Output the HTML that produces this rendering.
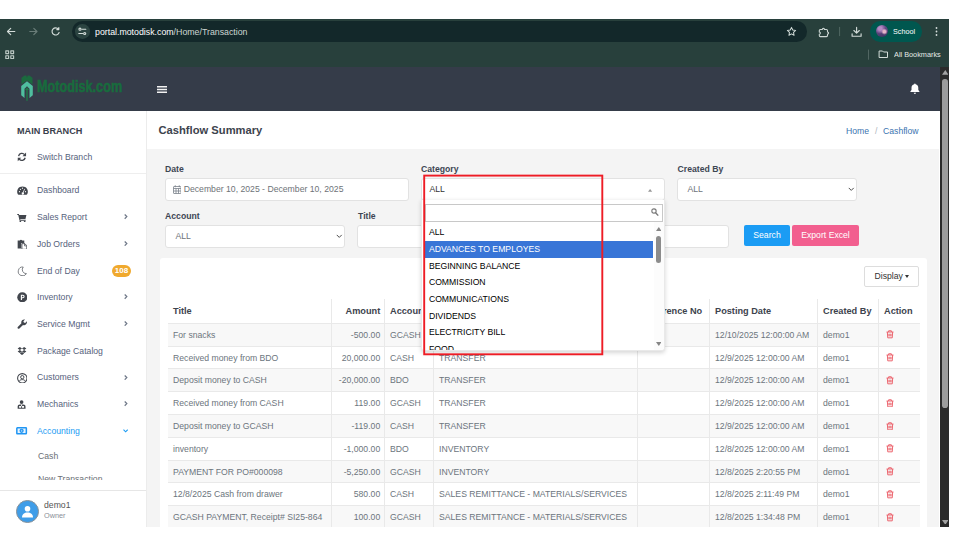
<!DOCTYPE html>
<html><head><meta charset="utf-8">
<style>
*{box-sizing:border-box;margin:0;padding:0}
html,body{width:960px;height:540px;overflow:hidden;background:#fff;font-family:"Liberation Sans",sans-serif;}
.abs{position:absolute}
#win{position:absolute;left:0;top:19px;width:949px;height:508px;overflow:hidden;background:#f4f4f4}
/* browser chrome */
#chrome{position:absolute;left:0;top:0;width:949px;height:48px;background:#28403c}
#omni{position:absolute;left:72px;top:2.200px;width:735px;height:20.600px;border-radius:10.300px;background:#13282a}
#omni .url{position:absolute;left:22.500px;top:5.700px;font-size:9.300px;color:#fff;white-space:nowrap;transform:scaleX(.945);transform-origin:0 0}
#prof{position:absolute;left:870px;top:2.300px;width:52px;height:20.300px;border-radius:10.200px;background:#00574f}
#prof span{position:absolute;left:22.500px;top:6px;font-size:8px;color:#fff;transform:scaleX(.9);transform-origin:0 0}
#bm{position:absolute;left:893.5px;top:30.5px;font-size:8px;color:#e3e8e6;white-space:nowrap;transform:scaleX(.915);transform-origin:0 0}
/* app header */
#hdr{position:absolute;left:0;top:48px;width:940px;height:44px;background:#353c49;z-index:2}
#logo{position:absolute;left:36.600px;top:11.300px;font-size:15.800px;font-weight:bold;color:#186c3d;-webkit-text-stroke:.5px #186c3d;transform:scaleX(.802);transform-origin:0 0;white-space:nowrap}
/* sidebar */
#side{position:absolute;left:0;top:92px;width:147px;height:416px;background:#fff;border-right:1px solid #ececec}
.mi{position:absolute;left:37px;font-size:8.67px;color:#56627c;white-space:nowrap}
.chev{position:absolute;left:123px;width:6px;height:8px}
.ico{position:absolute;left:16px;width:12px;height:12px}
/* scrollbar */
#sb{position:absolute;left:940px;top:48px;width:9px;height:460px;background:#2b2b2b}
#sb .th{position:absolute;left:2.100px;top:11.800px;width:5.500px;height:329.200px;border-radius:2.800px;background:#9c9c9c}
/* main */
#titlebar{position:absolute;left:147px;top:92px;width:793px;height:38px;background:#fff}
#titlebar h1{position:absolute;left:11.5px;top:13px;font-size:11.2px;font-weight:bold;color:#3d434d}
.bc{position:absolute;top:14.500px;font-size:8.67px;color:#3a74b0}
.lbl{position:absolute;font-size:8.67px;font-weight:bold;color:#3d4653}
.inp{position:absolute;height:22.600px;background:#fff;border:1px solid #e2e2e2;border-radius:3px;font-size:8.67px;color:#6e7378;line-height:20.500px;padding-left:9.500px;white-space:nowrap}
#card{position:absolute;left:160px;top:239px;width:767px;height:280px;background:#fff;border-radius:3px}
.btn{position:absolute;top:206.400px;height:21px;font-size:8.67px;color:#fff;text-align:center;line-height:20px;border-radius:2px}
table{position:absolute;left:168px;top:280.400px;width:751.500px;border-collapse:collapse;table-layout:fixed;font-size:8.67px;color:#6c757d}
td,th{height:22.8px;padding:0 5px;border-left:1px solid #e9e9e9;border-top:1px solid #e9e9e9;white-space:nowrap;overflow:hidden;text-align:left}
th{font-size:9.2px;color:#3d434d;border-top:none;height:24px}
td:first-child,th:first-child{border-left:none}
tr.o td{background:#f8f8f8}
td.r,th.r{text-align:right;padding-right:3.800px}
/* dropdown */
#dd{position:absolute;left:421px;top:181.200px;width:243.800px;height:151.200px;background:#fff;border:1px solid #e9e9e9;border-top:none;border-radius:0 0 3.500px 3.500px;box-shadow:0 1.500px 4px rgba(0,0,0,.16);overflow:hidden}
#dd .s{position:absolute;left:3.200px;top:3.600px;width:237.600px;height:18.200px;border:1px solid #c8c8c8;background:#fff}
.op{position:absolute;left:3.200px;width:228.200px;height:16.200px;font-size:8.67px;line-height:16.200px;color:#000;padding-left:3.700px;white-space:nowrap}
.op.h{background:#3875d7;color:#fff;height:16.400px;line-height:16.400px}
#red{position:absolute;left:422px;top:154px;width:184px;height:184px}
</style></head><body>
<div id="win">
 <div id="chrome">
  <svg class="abs" style="left:0;top:0" width="949" height="48" viewBox="0 0 949 48" fill="none" stroke="#d3dcd9" stroke-width="1.150" stroke-linecap="round" stroke-linejoin="round">
   <path d="M14.800 12.500H7.700M10.700 9.300l-3.200 3.200 3.200 3.200"/>
   <path d="M29.800 12.500H36.800M33.800 9.300l3.200 3.200-3.200 3.200" stroke="#6a7d79"/>
   <path d="M58.5 10.2a3.6 3.6 0 1 0 .6 3.3M58.8 8.6v2h-2"/>
   <g stroke-width="1.150" stroke="#bcc8c4"><rect x="5.800" y="31.800" width="2.800" height="2.800"/><rect x="10.800" y="31.800" width="2.800" height="2.800"/><rect x="5.800" y="36.700" width="2.800" height="2.800"/><rect x="10.800" y="36.700" width="2.800" height="2.800"/></g>
   <path d="M820.300 10.500h2a1.100 1.100 0 0 1 2.200 0h2a1 1 0 0 1 1 1v1.400a1.100 1.100 0 0 1 0 2.200v1.500a1 1 0 0 1-1 1h-6.200a1 1 0 0 1-1-1v-1.400a1.100 1.100 0 0 0 0-2.200v-1.500a1 1 0 0 1 1-1z" stroke-width="1.050" stroke="#cdd7d4"/>
   <path d="M839.600 8.300v8.400" stroke="#566b67" stroke-width=".9"/>
   <path d="M856.600 8.400v5.600M853.900 11.500l2.700 2.700 2.700-2.700M852.100 14.800v2.400h9v-2.400" stroke="#d3dcd9"/>
   <path d="M868.500 31v9.300" stroke="#566b67" stroke-width=".9"/>
   <path d="M879.5 32h3l1 1h4v5.500h-8z" stroke-width="1"/>
  </svg>
  <div id="omni">
   <div class="abs" style="left:3px;top:3px;width:14.600px;height:14.600px;border-radius:7.300px;background:#2b4441"></div><svg class="abs" style="left:3px;top:3px" width="14.600" height="14.600" viewBox="0 0 14.600 14.600" fill="none" stroke="#d5dedb" stroke-width="1.100" stroke-linecap="round"><circle cx="5" cy="5.200" r="1.050"/><path d="M7 5.200h3.800M3.800 9.500h3.800"/><circle cx="9.700" cy="9.500" r="1.050"/></svg>
   <div class="url">portal.motodisk.com<span style="color:#cdd6d3">/Home/Transaction</span></div>
   <svg class="abs" style="left:714px;top:4.800px" width="11" height="11" viewBox="0 0 24 24" fill="none" stroke="#cfd9d6" stroke-width="2.200" stroke-linejoin="round"><path d="M12 3l2.700 5.800 6.300.800-4.600 4.400 1.200 6.300L12 17.200 6.400 20.300l1.200-6.300L3 9.600l6.300-.8z"/></svg>
  </div>
  <div id="prof"><div class="abs" style="left:6px;top:4.200px;width:12px;height:12px;border-radius:6px;background:radial-gradient(circle at 70% 55%,#e7b3c9 0 12%,rgba(231,179,201,0) 30%),radial-gradient(circle at 35% 30%,#b58ac4 0 15%,rgba(181,138,196,0) 45%),linear-gradient(160deg,#7a5a9c,#3d3160)"></div><span>School</span></div>
  <svg class="abs" style="left:933.500px;top:8px" width="5" height="9" viewBox="0 0 5 9" fill="#d6dedb"><circle cx="2.500" cy="1" r=".9"/><circle cx="2.500" cy="4.500" r=".9"/><circle cx="2.500" cy="8" r=".9"/></svg>
  <div id="bm">All Bookmarks</div>
 </div>
 <div id="hdr">
  <svg class="abs" style="left:21px;top:8.400px" width="12" height="26" viewBox="0 0 12 26"><path d="M.5 9.500V2.700L3.700.4h1.500l.8 2.200.8-2.200h1.500l3.200 2.300v6.800L6 5.500z" fill="#1b6a3e"/><path d="M6 6.300L.2 11v9.200l3.300 2.800v-9.300L6 11.200l2.500 2.500V23l3.300-2.800V11z" fill="#4fbf9f"/><path d="M6 12.200l-2.100 2.900h1.400v10.700h1.400V15.100h1.400z" fill="#1f7a48"/></svg>
  <div id="logo">Motodisk.com</div>
  <svg class="abs" style="left:157px;top:18.600px" width="10.200" height="7" viewBox="0 0 10.200 7" fill="#f2f2f2"><rect y="0" width="10.200" height="1.500"/><rect y="2.750" width="10.200" height="1.500"/><rect y="5.500" width="10.200" height="1.500"/></svg>
  <svg class="abs" style="left:910.300px;top:15.800px" width="9.800" height="11.600" viewBox="0 0 11 13" fill="#fff"><path d="M5.500 0.500c.5 0 .8.300.8.800 2 .5 3 2 3 4v2.500l1.200 1.500v.7H.5v-.7L1.700 7.800V5.300c0-2 1-3.500 3-4 0-.5.300-.8.800-.8zM4.200 11h2.600a1.300 1.300 0 0 1-2.600 0z"/></svg>
 </div>
 <div id="side">
  <div class="mi" style="top:15.2px;left:17px;font-weight:bold;color:#3a404c;font-size:9.14px">MAIN BRANCH</div>
  <svg class="abs" style="left:17.1px;top:41.1px" width="9.8" height="9.8" viewBox="0 0 16 16"><g fill="none" stroke="#42464d" stroke-width="2.200"><path d="M2.600 6.600A5.600 5.600 0 0 1 12.400 4.300"/><path d="M13.400 9.400A5.600 5.600 0 0 1 3.600 11.700"/></g><path d="M14.800 1v5.800H9z" fill="#42464d"/><path d="M1.200 15V9.200H7z" fill="#42464d"/></svg>
  <svg class="abs" style="left:16.5px;top:73.7px" width="11" height="11" viewBox="0 0 16 16"><path d="M8 2a7.800 7.800 0 0 0-6.800 11.600c.2.400.6.600 1 .6h11.600c.4 0 .8-.2 1-.6A7.800 7.800 0 0 0 8 2z" fill="#42464d"/><g fill="#fff"><circle cx="3.600" cy="9.800" r=".9"/><circle cx="5" cy="6.200" r=".9"/><circle cx="8" cy="4.700" r=".9"/><circle cx="12.400" cy="9.800" r=".9"/><path d="M10.600 5.400l.9.300-1.900 5.200a1.700 1.700 0 1 1-1-.4z"/></g></svg>
  <svg class="abs" style="left:17.2px;top:101.5px" width="9.6" height="9.6" viewBox="0 0 16 16"><path d="M.4 1.800h2.800l.5 1.700h12l-1.600 6.400H5.400l.3 1.300h8.800v1.600H4.300L2.100 3.400H.4z" fill="#42464d"/><circle cx="5.600" cy="14.200" r="1.400" fill="#42464d"/><circle cx="12.800" cy="14.200" r="1.400" fill="#42464d"/></svg>
  <svg class="abs" style="left:16.7px;top:127.5px" width="10.6" height="10.6" viewBox="0 0 16 16"><path d="M1 2.200h3.200a2 2 0 0 1 3.600 0H11V6H6.400v8.400H1z" fill="#42464d"/><path d="M7.400 7h4.400l3 3v5.600H7.400z" fill="#fff" stroke="#42464d" stroke-width="1.300"/><path d="M11.400 7v3.400h3.400" fill="none" stroke="#42464d" stroke-width="1.100"/></svg>
  <svg class="abs" style="left:16.8px;top:154.6px" width="10.4" height="10.4" viewBox="0 0 16 16"><path d="M9.600 1.600A6.800 6.800 0 1 0 14.600 11.800 6.200 6.200 0 0 1 9.600 1.600z" fill="none" stroke="#55595f" stroke-width="1.150" stroke-linejoin="round"/></svg>
  <svg class="abs" style="left:16.7px;top:180.7px" width="10.6" height="10.6" viewBox="0 0 16 16"><circle cx="8" cy="8" r="7.600" fill="#42464d"/><path d="M5.800 12V4.200h3.100a2.600 2.600 0 0 1 0 5.200H7.500V12zM7.500 5.700v2.200h1.300a1.100 1.100 0 0 0 0-2.200z" fill="#fff"/></svg>
  <svg class="abs" style="left:16.8px;top:207.6px" width="10.4" height="10.4" viewBox="0 0 16 16"><path d="M15.200 3.600l-2.600 2.600-2-.8-.8-2 2.600-2.600a4.600 4.600 0 0 0-5.600 5.900L1.200 12.300a1.800 1.800 0 0 0 2.500 2.500l5.600-5.600a4.600 4.600 0 0 0 5.900-5.600z" fill="#42464d"/></svg>
  <svg class="abs" style="left:17px;top:234.5px" width="10" height="10" viewBox="0 0 16 16"><path d="M4.600 1.400L1 3.800l3.600 2.400L8 3.800zM11.400 1.400L8 3.800l3.400 2.400L15 3.800zM1 8.600l3.600 2.400L8 8.600 4.600 6.200zM11.400 6.200L8 8.600l3.400 2.400L15 8.600zM4.600 11.800L8 14.200l3.400-2.400L8 9.600z" fill="#42464d"/></svg>
  <svg class="abs" style="left:16.7px;top:261.5px" width="10.6" height="10.6" viewBox="0 0 16 16"><circle cx="8" cy="8" r="7.100" fill="none" stroke="#42464d" stroke-width="1.600"/><circle cx="8" cy="6.300" r="2.500" fill="none" stroke="#42464d" stroke-width="1.500"/><path d="M3.300 12.600c.9-1.900 2.600-2.600 4.700-2.600s3.800.7 4.700 2.600" fill="none" stroke="#42464d" stroke-width="1.500"/></svg>
  <svg class="abs" style="left:17.4px;top:288.5px" width="9.2" height="9" viewBox="0 0 16 16"><circle cx="8" cy="3.600" r="3.300" fill="#42464d"/><path d="M1 15.600v-3.800c0-2.400 1.700-3.800 3.800-3.800h6.400c2.100 0 3.800 1.400 3.800 3.800v3.800z" fill="#42464d"/><path d="M3.600 10.800h3.600v2.800H3.600zM8.800 10.800h3.600v2.800H8.800z" fill="#fff"/><path d="M7.200 8h1.600v3H7.200z" fill="#fff"/></svg>
  <svg class="abs" style="left:16.4px;top:316.1px" width="11.2" height="7.6" viewBox="0 0 22 15"><rect x="1.600" y="1.600" width="18.800" height="11.800" rx="1" fill="#e9f4fe" stroke="#2196f3" stroke-width="3"/><ellipse cx="11" cy="7.500" rx="4.200" ry="4.200" fill="#2196f3"/><ellipse cx="11" cy="7.500" rx="1.500" ry="2.200" fill="#8fc9fa"/></svg>
  <svg class="abs" style="left:124px;top:103.4px" width="3.600" height="5.200" viewBox="0 0 3.600 5.200" fill="none" stroke="#6f7888" stroke-width="1.250"><path d="M.7.500L2.800 2.600.7 4.700"/></svg>
  <svg class="abs" style="left:124px;top:130.2px" width="3.600" height="5.200" viewBox="0 0 3.600 5.200" fill="none" stroke="#6f7888" stroke-width="1.250"><path d="M.7.500L2.800 2.600.7 4.700"/></svg>
  <svg class="abs" style="left:124px;top:183.4px" width="3.600" height="5.200" viewBox="0 0 3.600 5.200" fill="none" stroke="#6f7888" stroke-width="1.250"><path d="M.7.500L2.800 2.600.7 4.700"/></svg>
  <svg class="abs" style="left:124px;top:210.2px" width="3.600" height="5.200" viewBox="0 0 3.600 5.200" fill="none" stroke="#6f7888" stroke-width="1.250"><path d="M.7.500L2.800 2.600.7 4.700"/></svg>
  <svg class="abs" style="left:124px;top:263.7px" width="3.600" height="5.200" viewBox="0 0 3.600 5.200" fill="none" stroke="#6f7888" stroke-width="1.250"><path d="M.7.500L2.800 2.600.7 4.700"/></svg>
  <svg class="abs" style="left:124px;top:290.4px" width="3.600" height="5.200" viewBox="0 0 3.600 5.200" fill="none" stroke="#6f7888" stroke-width="1.250"><path d="M.7.500L2.800 2.600.7 4.700"/></svg>
  <svg class="abs" style="left:123.300px;top:318px" width="5.200" height="3.600" viewBox="0 0 5.200 3.600" fill="none" stroke="#1d9cf3" stroke-width="1.100"><path d="M.5.700L2.600 2.800 4.700.7"/></svg>
  <div class="mi" style="top:41.2px">Switch Branch</div>
  <div class="abs" style="left:0;top:62px;width:146px;height:1px;background:#eee"></div>
  <div class="mi" style="top:74.2px">Dashboard</div>
  <div class="mi" style="top:101.2px">Sales Report</div>
  <div class="mi" style="top:128.2px">Job Orders</div>
  <div class="mi" style="top:155.2px">End of Day</div>
  <div class="abs" style="left:112px;top:154px;width:19px;height:12px;border-radius:6px;background:#f0a92e;color:#fff;font-size:8px;font-weight:bold;text-align:center;line-height:12px">108</div>
  <div class="mi" style="top:181.2px">Inventory</div>
  <div class="mi" style="top:208.2px">Service Mgmt</div>
  <div class="mi" style="top:235.2px">Package Catalog</div>
  <div class="mi" style="top:261.2px">Customers</div>
  <div class="mi" style="top:288.2px">Mechanics</div>
  <div class="mi" style="top:315.2px;color:#1d9cf3">Accounting</div>
  <div class="abs" style="left:0;top:330px;width:146px;height:39.300px;overflow:hidden">
   <div class="mi" style="top:10.2px;left:38px;color:#6b6f76">Cash</div>
   <div class="mi" style="top:33.2px;left:38px;color:#6b6f76">New Transaction</div>
  </div>
  <div class="abs" style="left:0;top:379px;width:146px;height:38px;background:#fff;border-top:1px solid #e6e6e6">
   <div class="abs" style="left:16px;top:9px;width:23px;height:23px;border-radius:12px;background:#3f9de8;border:1px solid #8a9299"></div>
   <svg class="abs" style="left:21px;top:14px" width="13" height="13" viewBox="0 0 13 13" fill="#fff"><circle cx="6.500" cy="3.800" r="2.800"/><path d="M1 12.500c0-3.500 2.500-5 5.500-5s5.500 1.500 5.500 5z"/></svg>
   <div class="abs" style="left:44px;top:8.500px;font-size:8.67px;color:#555">demo1</div>
   <div class="abs" style="left:44px;top:20.200px;font-size:7.3px;color:#8a8f98">Owner</div>
  </div>
 </div>
 <div id="titlebar"><h1>Cashflow Summary</h1>
  <div class="bc" style="left:699px">Home</div><div class="bc" style="left:728px;color:#b0b6bd">/</div><div class="bc" style="left:736px">Cashflow</div>
 </div>
 <div class="lbl" style="left:165px;top:145px">Date</div>
 <div class="inp" style="left:165px;top:159.200px;width:244px;padding-left:17.700px;line-height:20px"><svg class="abs" style="left:6.600px;top:5.500px" width="8.500" height="9" viewBox="0 0 17 18" fill="none" stroke="#7a828a" stroke-width="1.600"><rect x="1" y="3" width="15" height="14" rx="1"/><path d="M1 7h15M6 7v10M11 7v10M1 12h15M4.500 0.500v4M12.500 0.500v4"/></svg>December 10, 2025 - December 10, 2025</div>
 <div class="lbl" style="left:421px;top:145px">Category</div>
 <div class="inp" style="left:421px;top:159.200px;width:243.500px;color:#333;padding-left:7.500px;line-height:20px">ALL<svg class="abs" style="left:226.400px;top:10.300px" width="4.200" height="2.800" viewBox="0 0 9 6" fill="#999"><path d="M4.500 0L9 6H0z"/></svg></div>
 <div class="lbl" style="left:677.600px;top:145px">Created By</div>
 <div class="inp" style="left:677px;top:159.200px;width:180px">ALL<svg class="abs" style="right:1.200px;top:8px" width="6.500" height="4.400" viewBox="0 0 13 8.800" fill="none" stroke="#444" stroke-width="1.900"><path d="M1.500 1.800l5 5 5-5"/></svg></div>
 <div class="lbl" style="left:165px;top:192px">Account</div>
 <div class="inp" style="left:165px;top:206.300px;width:180px">ALL<svg class="abs" style="right:1.200px;top:8px" width="6.500" height="4.400" viewBox="0 0 13 8.800" fill="none" stroke="#444" stroke-width="1.900"><path d="M1.500 1.800l5 5 5-5"/></svg></div>
 <div class="lbl" style="left:358px;top:192px">Title</div>
 <div class="inp" style="left:357px;top:206.300px;width:372px"></div>
 <div class="btn" style="left:744px;width:46px;background:#1b9cf4">Search</div>
 <div class="btn" style="left:792px;width:67px;background:#f25f8f">Export Excel</div>
 <div id="card"></div>
 <div class="abs" style="left:864.200px;top:247.400px;width:54.700px;height:20.800px;border:1px solid #ddd;border-radius:2px;background:#fff;font-size:8.67px;color:#333;line-height:19.500px;padding-left:9.300px;white-space:nowrap">Display<span style="display:inline-block;width:0;height:0;border-left:2.700px solid transparent;border-right:2.700px solid transparent;border-top:3px solid #333;margin-left:2.500px;vertical-align:1px"></span></div>
 <table>
  <colgroup><col style="width:163.500px"><col style="width:53px"><col style="width:49px"><col style="width:204px"><col style="width:72px"><col style="width:108px"><col style="width:61px"><col style="width:41px"></colgroup>
  <tr><th>Title</th><th class="r">Amount</th><th>Account</th><th>Category</th><th>Reference No</th><th>Posting Date</th><th>Created By</th><th>Action</th></tr>
  <tr class="o"><td>For snacks</td><td class="r">-500.00</td><td>GCASH</td><td>EXPENSE</td><td></td><td>12/10/2025 12:00:00 AM</td><td>demo1</td><td class="t"><svg width="8" height="8.600" viewBox="0 0 15 17" preserveAspectRatio="none" fill="none" stroke="#eb5c66" stroke-width="1.800" style="display:block;margin:0 0 0 2.300px"><path d="M1 4h13M5 4V1.500h5V4M2.500 4l.8 11.500h8.400L12.500 4M5.500 7.500v5M7.500 7.500v5M9.500 7.500v5"/></svg></td></tr>
  <tr><td>Received money from BDO</td><td class="r">20,000.00</td><td>CASH</td><td>TRANSFER</td><td></td><td>12/9/2025 12:00:00 AM</td><td>demo1</td><td class="t"><svg width="8" height="8.600" viewBox="0 0 15 17" preserveAspectRatio="none" fill="none" stroke="#eb5c66" stroke-width="1.800" style="display:block;margin:0 0 0 2.300px"><path d="M1 4h13M5 4V1.500h5V4M2.500 4l.8 11.500h8.400L12.500 4M5.500 7.500v5M7.500 7.500v5M9.500 7.500v5"/></svg></td></tr>
  <tr class="o"><td>Deposit money to CASH</td><td class="r">-20,000.00</td><td>BDO</td><td>TRANSFER</td><td></td><td>12/9/2025 12:00:00 AM</td><td>demo1</td><td class="t"><svg width="8" height="8.600" viewBox="0 0 15 17" preserveAspectRatio="none" fill="none" stroke="#eb5c66" stroke-width="1.800" style="display:block;margin:0 0 0 2.300px"><path d="M1 4h13M5 4V1.500h5V4M2.500 4l.8 11.500h8.400L12.500 4M5.500 7.500v5M7.500 7.500v5M9.500 7.500v5"/></svg></td></tr>
  <tr><td>Received money from CASH</td><td class="r">119.00</td><td>GCASH</td><td>TRANSFER</td><td></td><td>12/9/2025 12:00:00 AM</td><td>demo1</td><td class="t"><svg width="8" height="8.600" viewBox="0 0 15 17" preserveAspectRatio="none" fill="none" stroke="#eb5c66" stroke-width="1.800" style="display:block;margin:0 0 0 2.300px"><path d="M1 4h13M5 4V1.500h5V4M2.500 4l.8 11.500h8.400L12.500 4M5.500 7.500v5M7.500 7.500v5M9.500 7.500v5"/></svg></td></tr>
  <tr class="o"><td>Deposit money to GCASH</td><td class="r">-119.00</td><td>CASH</td><td>TRANSFER</td><td></td><td>12/9/2025 12:00:00 AM</td><td>demo1</td><td class="t"><svg width="8" height="8.600" viewBox="0 0 15 17" preserveAspectRatio="none" fill="none" stroke="#eb5c66" stroke-width="1.800" style="display:block;margin:0 0 0 2.300px"><path d="M1 4h13M5 4V1.500h5V4M2.500 4l.8 11.500h8.400L12.500 4M5.500 7.500v5M7.500 7.500v5M9.500 7.500v5"/></svg></td></tr>
  <tr><td>inventory</td><td class="r">-1,000.00</td><td>BDO</td><td>INVENTORY</td><td></td><td>12/8/2025 12:00:00 AM</td><td>demo1</td><td class="t"><svg width="8" height="8.600" viewBox="0 0 15 17" preserveAspectRatio="none" fill="none" stroke="#eb5c66" stroke-width="1.800" style="display:block;margin:0 0 0 2.300px"><path d="M1 4h13M5 4V1.500h5V4M2.500 4l.8 11.500h8.400L12.500 4M5.500 7.500v5M7.500 7.500v5M9.500 7.500v5"/></svg></td></tr>
  <tr class="o"><td>PAYMENT FOR PO#000098</td><td class="r">-5,250.00</td><td>GCASH</td><td>INVENTORY</td><td></td><td>12/8/2025 2:20:55 PM</td><td>demo1</td><td class="t"><svg width="8" height="8.600" viewBox="0 0 15 17" preserveAspectRatio="none" fill="none" stroke="#eb5c66" stroke-width="1.800" style="display:block;margin:0 0 0 2.300px"><path d="M1 4h13M5 4V1.500h5V4M2.500 4l.8 11.500h8.400L12.500 4M5.500 7.500v5M7.500 7.500v5M9.500 7.500v5"/></svg></td></tr>
  <tr><td>12/8/2025 Cash from drawer</td><td class="r">580.00</td><td>CASH</td><td>SALES REMITTANCE - MATERIALS/SERVICES</td><td></td><td>12/8/2025 2:11:49 PM</td><td>demo1</td><td class="t"><svg width="8" height="8.600" viewBox="0 0 15 17" preserveAspectRatio="none" fill="none" stroke="#eb5c66" stroke-width="1.800" style="display:block;margin:0 0 0 2.300px"><path d="M1 4h13M5 4V1.500h5V4M2.500 4l.8 11.500h8.400L12.500 4M5.500 7.500v5M7.500 7.500v5M9.500 7.500v5"/></svg></td></tr>
  <tr class="o"><td>GCASH PAYMENT, Receipt# SI25-864</td><td class="r">100.00</td><td>GCASH</td><td>SALES REMITTANCE - MATERIALS/SERVICES</td><td></td><td>12/8/2025 1:34:48 PM</td><td>demo1</td><td class="t"><svg width="8" height="8.600" viewBox="0 0 15 17" preserveAspectRatio="none" fill="none" stroke="#eb5c66" stroke-width="1.800" style="display:block;margin:0 0 0 2.300px"><path d="M1 4h13M5 4V1.500h5V4M2.500 4l.8 11.500h8.400L12.500 4M5.500 7.500v5M7.500 7.500v5M9.500 7.500v5"/></svg></td></tr>
 </table>
 <div id="dd">
  <div class="s"><svg class="abs" style="right:2.500px;top:3.500px" width="8" height="8.500" viewBox="0 0 16 17" fill="none" stroke="#777" stroke-width="2.200"><circle cx="6" cy="6" r="4.300"/><path d="M9.200 9.400l5.300 5.800" stroke-width="2.800"/></svg></div>
  <div class="op" style="top:24px">ALL</div>
  <div class="op h" style="top:41.1px">ADVANCES TO EMPLOYES</div>
  <div class="op" style="top:57.4px">BEGINNING BALANCE</div>
  <div class="op" style="top:74.2px">COMMISSION</div>
  <div class="op" style="top:90.9px">COMMUNICATIONS</div>
  <div class="op" style="top:107.6px">DIVIDENDS</div>
  <div class="op" style="top:124.3px">ELECTRICITY BILL</div>
  <div class="op" style="top:141px">FOOD</div>
  <div class="abs" style="left:232px;top:22px;width:11px;height:129px;background:#fcfcfc"></div>
  <svg class="abs" style="left:233.700px;top:27.300px" width="5.600" height="4" viewBox="0 0 6 4" preserveAspectRatio="none" fill="#858585"><path d="M3 0l3 4H0z"/></svg>
  <div class="abs" style="left:233.700px;top:35.800px;width:5px;height:27.500px;border-radius:2.500px;background:#8c8c8c"></div>
  <svg class="abs" style="left:233.700px;top:141.600px" width="5.600" height="4" viewBox="0 0 6 4" preserveAspectRatio="none" fill="#858585"><path d="M0 0h6L3 4z"/></svg>
 </div>
 <svg id="red" viewBox="0 0 184 184"><rect x="2.200" y="2.600" width="178.100" height="178.700" fill="none" stroke="#ee1c25" stroke-width="1.900"/></svg>
 <div class="abs" style="left:939px;top:48px;width:1px;height:460px;background:#fff"></div>
 <div id="sb"><svg class="abs" style="left:1.500px;top:3px" width="6.600" height="4.800" viewBox="0 0 6 4" preserveAspectRatio="none" fill="#a2a2a2"><path d="M3 0l3 4H0z"/></svg><div class="th"></div><svg class="abs" style="left:1.500px;top:452.500px" width="6.600" height="4.800" viewBox="0 0 6 4" preserveAspectRatio="none" fill="#a2a2a2"><path d="M0 0h6L3 4z"/></svg></div>
</div>
</body></html>
